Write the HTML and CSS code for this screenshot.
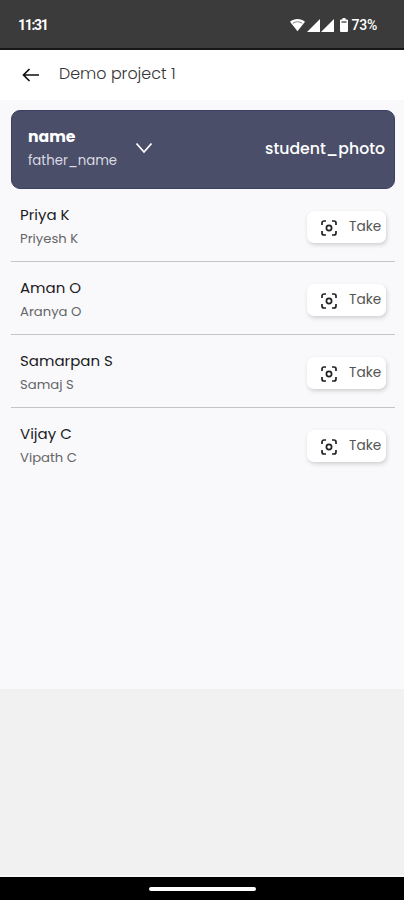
FILE: index.html
```html
<!DOCTYPE html>
<html lang="en">
<head>
    <meta charset="UTF-8">
    <meta name="viewport" content="width=device-width, initial-scale=1.0">
    <title>Demo project 1</title>
    <link rel="stylesheet" href="styles.css">
</head>
<body>
    <svg width="0" height="0" class="defs">
        <symbol id="scan" viewBox="0 0 16 16">
            <path d="M1 5V3a2 2 0 0 1 2-2h2M11 1h2a2 2 0 0 1 2 2v2M15 11v2a2 2 0 0 1-2 2h-2M5 15H3a2 2 0 0 1-2-2v-2" />
            <circle cx="8" cy="8" r="2.6" />
        </symbol>
    </svg>

    <div class="status-bar">
        <span class="time">11:31</span>
        <div class="status-icons">
            <svg class="wifi" width="15" height="14" viewBox="0 0 16 14">
                <path d="M0 3.6C4.6-.5 11.4-.5 16 3.6L8 13.6z" fill="#fff" />
                <path d="M3 5.2C6 3 10 3 13 5.2" fill="none" stroke="#777" stroke-width="1" />
            </svg>
            <svg class="signal" width="13" height="13" viewBox="0 0 13 13"><path d="M13 0v13H0z" fill="#fff" /></svg>
            <svg class="signal" width="13" height="13" viewBox="0 0 13 13"><path d="M13 0v13H0z" fill="#fff" /></svg>
            <svg class="battery" width="8" height="14" viewBox="0 0 8 14">
                <path d="M2.5 0h3v1.5H7a1 1 0 0 1 1 1V13a1 1 0 0 1-1 1H1a1 1 0 0 1-1-1V2.5a1 1 0 0 1 1-1h1.5z" fill="#fff" />
                <path d="M1.5 4h5" stroke="#555" stroke-width="1.5" />
            </svg>
            <span class="percent">73%</span>
        </div>
    </div>

    <header class="app-bar">
        <svg class="back" width="18" height="16" viewBox="0 0 18 16">
            <path d="M17 8H2M7.5 2L1.5 8L7.5 14" />
        </svg>
        <h1>Demo project 1</h1>
    </header>

    <main class="content">
        <div class="list-header">
            <div class="field-names">
                <span class="primary">name</span>
                <span class="secondary">father_name</span>
            </div>
            <svg class="chevron" width="18" height="12" viewBox="0 0 18 12"><path d="M1.5 1.5L9 10L16.5 1.5" /></svg>
            <span class="photo-field">student_photo</span>
        </div>

        <div class="row">
            <div class="person">
                <span class="name">Priya K</span>
                <span class="father">Priyesh K</span>
            </div>
            <button class="take-btn"><svg><use href="#scan" /></svg><span>Take</span></button>
        </div>
        <div class="row">
            <div class="person">
                <span class="name">Aman O</span>
                <span class="father">Aranya O</span>
            </div>
            <button class="take-btn"><svg><use href="#scan" /></svg><span>Take</span></button>
        </div>
        <div class="row">
            <div class="person">
                <span class="name">Samarpan S</span>
                <span class="father">Samaj S</span>
            </div>
            <button class="take-btn"><svg><use href="#scan" /></svg><span>Take</span></button>
        </div>
        <div class="row">
            <div class="person">
                <span class="name">Vijay C</span>
                <span class="father">Vipath C</span>
            </div>
            <button class="take-btn"><svg><use href="#scan" /></svg><span>Take</span></button>
        </div>
    </main>

    <div class="bottom-area"></div>
    <div class="nav-bar"><div class="handle"></div></div>
</body>
</html>
```
FILE: styles.css
```css
* {
    box-sizing: border-box;
}
body {
    margin: 0;
    height: 900px;
    display: flex;
    flex-direction: column;
    overflow: hidden;
    font-family: Poppins, Inter, sans-serif;
    background-color: #f1f1f1;
}
.defs {
    position: absolute;
}
.status-bar {
    height: 50px;
    flex-shrink: 0;
    display: flex;
    justify-content: space-between;
    align-items: center;
    padding: 2px 27px 0 18px;
    background-color: #3b3b3b;
    border-bottom: 2px solid #161616;
    color: white;
    font-family: Roboto, sans-serif;
    font-weight: 500;
}
.time {
    font-size: 14px;
    letter-spacing: -1.3px;
    font-weight: 700;
}
.status-icons {
    display: flex;
    align-items: center;
}
.signal {
    margin-left: 1.5px;
}
.battery {
    margin: 0 3px 0 6px;
}
.percent {
    font-size: 14px;
    letter-spacing: -0.2px;
}
.app-bar {
    height: 50px;
    flex-shrink: 0;
    display: flex;
    align-items: center;
    padding-left: 22px;
    background-color: white;
}
.back {
    fill: none;
    stroke: #111;
    stroke-width: 1.7;
}
h1 {
    margin: 0 0 3px 19px;
    font-size: 15.9px;
    font-weight: 300;
    color: #333;
}
.content {
    height: 589px;
    flex-shrink: 0;
    padding: 10px 9px 0 11px;
    background-color: #f9f9fc;
}
.list-header {
    height: 78.5px;
    display: flex;
    align-items: center;
    padding: 0 9px 2px 17px;
    border-radius: 9px;
    background-color: #4a4e69;
    border: 1px solid #3b3f63;
    color: white;
}
.field-names, .person {
    display: flex;
    flex-direction: column;
}
.field-names {
    width: 107px;
    margin-left: -1px;
}
.primary {
    font-size: 15.7px;
    line-height: 25px;
    font-weight: 700;
}
.secondary {
    font-size: 13.3px;
    line-height: 24px;
    color: #d9dae3;
}
.chevron {
    fill: none;
    stroke: white;
    stroke-width: 1.8;
}
.photo-field {
    margin-left: auto;
    font-size: 15.7px;
    font-weight: 500;
}
.row {
    height: 73.3px;
    display: flex;
    justify-content: space-between;
    padding: 14px 9px 0;
    border-bottom: 1px solid #c4c4c7;
}
.row:last-child {
    border-bottom: none;
}
.name {
    font-size: 15px;
    line-height: 24px;
    color: #1c1c1c;
}
.father {
    font-size: 13.2px;
    line-height: 24px;
    color: #666;
}
.take-btn {
    width: 79px;
    height: 32px;
    margin-top: 8px;
    display: flex;
    align-items: center;
    padding: 0 0 0 14px;
    border: none;
    border-radius: 7px;
    background-color: white;
    box-shadow: 1px 2px 4px rgba(0, 0, 0, 0.17);
    font-family: inherit;
    font-size: 13.7px;
    color: #555;
}
.take-btn svg {
    width: 16px;
    height: 16px;
    margin-top: 2px;
    flex-shrink: 0;
    fill: none;
    stroke: #222;
    stroke-width: 1.7;
}
.take-btn span {
    margin-left: 12px;
}
.bottom-area {
    flex: 1;
    border-bottom: 2px solid #f7f7f7;
}
.nav-bar {
    height: 23px;
    flex-shrink: 0;
    display: flex;
    justify-content: center;
    align-items: center;
    background-color: black;
}
.handle {
    width: 107px;
    height: 4px;
    border-radius: 2px;
    background-color: white;
}
```
